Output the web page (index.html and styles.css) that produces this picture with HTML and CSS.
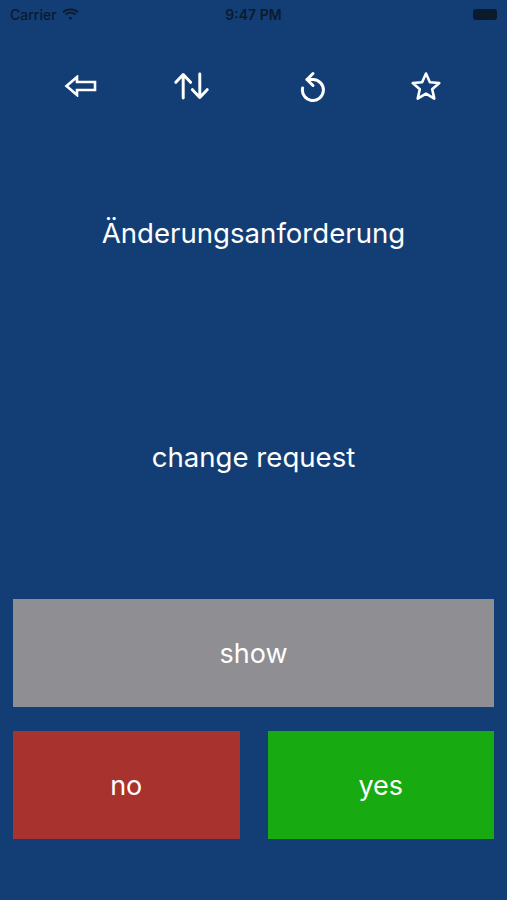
FILE: index.html
```html
<!DOCTYPE html>
<html lang="de">
<head>
    <meta charset="UTF-8">
    <meta name="viewport" content="width=device-width, initial-scale=1.0">
    <title>Karteikarten</title>
    <link rel="stylesheet" href="styles.css">
</head>
<body>
    <div class="status-bar">
        <div class="status-left">
            <span class="carrier">Carrier</span>
            <svg class="wifi" width="17" height="12" viewBox="0 0 17 12">
                <path d="M8.5 2.2c2.6 0 5 1 6.8 2.7l1.2-1.3C14.4 1.6 11.6.4 8.5.4S2.6 1.6.5 3.6l1.2 1.3C3.5 3.2 5.9 2.2 8.5 2.2z" fill="#0c1a2e"/>
                <path d="M8.5 5.6c1.7 0 3.2.6 4.4 1.7l1.2-1.3C12.6 4.6 10.6 3.8 8.5 3.8S4.4 4.6 2.9 6l1.2 1.3C5.3 6.2 6.8 5.6 8.5 5.6z" fill="#0c1a2e"/>
                <path d="M8.5 8.9c.8 0 1.5.3 2.1.8l-2.1 2.3-2.1-2.3c.6-.5 1.3-.8 2.1-.8z" fill="#0c1a2e"/>
            </svg>
        </div>
        <span class="clock">9:47 PM</span>
        <div class="status-right">
            <div class="battery"></div>
        </div>
    </div>

    <div class="toolbar">
        <button class="tool" title="Zurück">
            <svg width="34" height="22" viewBox="0 0 34 22">
                <path d="M2.5 11 L13 2 V7 H31 V15 H13 V20 Z" fill="none" stroke="#fff" stroke-width="2.6" stroke-linejoin="miter"/>
            </svg>
        </button>
        <button class="tool swap" title="Tauschen">
            <svg width="38" height="32" viewBox="0 0 38 32">
                <path d="M10 29 V4 M2 12 L10 3.5 L18 12" fill="none" stroke="#fff" stroke-width="3.2" stroke-linecap="round" stroke-linejoin="round"/>
                <path d="M28 3 V28 M20 20 L28 28.5 L36 20" fill="none" stroke="#fff" stroke-width="3.2" stroke-linecap="round" stroke-linejoin="round"/>
            </svg>
        </button>
        <button class="tool restart" title="Neu starten">
            <svg width="26" height="32" viewBox="0 0 26 32">
                <path d="M7 9.5 H13 A10.5 10.5 0 1 1 2.6 18" fill="none" stroke="#fff" stroke-width="3" stroke-linecap="round" stroke-linejoin="round"/>
                <path d="M13 3.5 L7 9.5 L13 15.5" fill="none" stroke="#fff" stroke-width="3" stroke-linecap="round" stroke-linejoin="round"/>
            </svg>
        </button>
        <button class="tool" title="Favorit">
            <svg width="32" height="31" viewBox="0 0 32 31">
                <path d="M16 2.5 L19.9 11.2 L29.3 12 L22.2 18.3 L24.3 27.6 L16 22.7 L7.7 27.6 L9.8 18.3 L2.7 12 L12.1 11.2 Z" fill="none" stroke="#fff" stroke-width="2.6" stroke-linejoin="round"/>
            </svg>
        </button>
    </div>

    <div class="card">
        <p class="word front">Änderungsanforderung</p>
        <p class="word back">change request</p>
    </div>

    <div class="actions">
        <button class="btn show">show</button>
        <div class="answer-row">
            <button class="btn no">no</button>
            <button class="btn yes">yes</button>
        </div>
    </div>
</body>
</html>
```

FILE: styles.css
```css
body {
    margin: 0;
    padding: 0;
    width: 507px;
    height: 900px;
    background-color: #123e75;
    font-family: Inter, "Liberation Sans", sans-serif;
    color: #fff;
    overflow: hidden;
}
.status-bar {
    height: 28px;
    display: flex;
    align-items: center;
    justify-content: space-between;
    padding: 0 10px;
    color: #0c1a2e;
    font-size: 14px;
}
.status-left {
    flex: 1;
    display: flex;
    align-items: center;
    gap: 5px;
}
.carrier {
    font-weight: 500;
}
.clock {
    font-weight: 600;
}
.status-right {
    flex: 1;
    display: flex;
    justify-content: flex-end;
}
.battery {
    width: 24px;
    height: 11px;
    border-radius: 3px;
    background: #0c1a2e;
}
.toolbar {
    display: flex;
    justify-content: space-between;
    padding: 0 59px;
    margin-top: 36px;
}
.tool {
    width: 44px;
    height: 44px;
    padding: 0;
    border: none;
    background: none;
    display: flex;
    align-items: center;
    justify-content: center;
    cursor: pointer;
}
.swap svg {
    margin-right: 9px;
}
.restart svg {
    margin-left: 4px;
}
.card {
    height: 491px;
    display: flex;
    flex-direction: column;
    align-items: center;
}
.word {
    margin: 0;
    font-size: 27.6px;
    line-height: 32px;
}
.front {
    margin-top: 109px;
}
.back {
    margin-top: 192px;
}
.actions {
    padding: 0 13px;
    display: flex;
    flex-direction: column;
    gap: 24px;
}
.answer-row {
    display: flex;
    gap: 28px;
}
.btn {
    height: 108px;
    border: none;
    color: #fff;
    font-family: Inter, "Liberation Sans", sans-serif;
    font-size: 27px;
    cursor: pointer;
}
.show {
    width: 100%;
    background-color: #8e8e93;
}
.no {
    flex: 1;
    background-color: #a8322d;
}
.yes {
    flex: 1;
    background-color: #18aa11;
}
```
